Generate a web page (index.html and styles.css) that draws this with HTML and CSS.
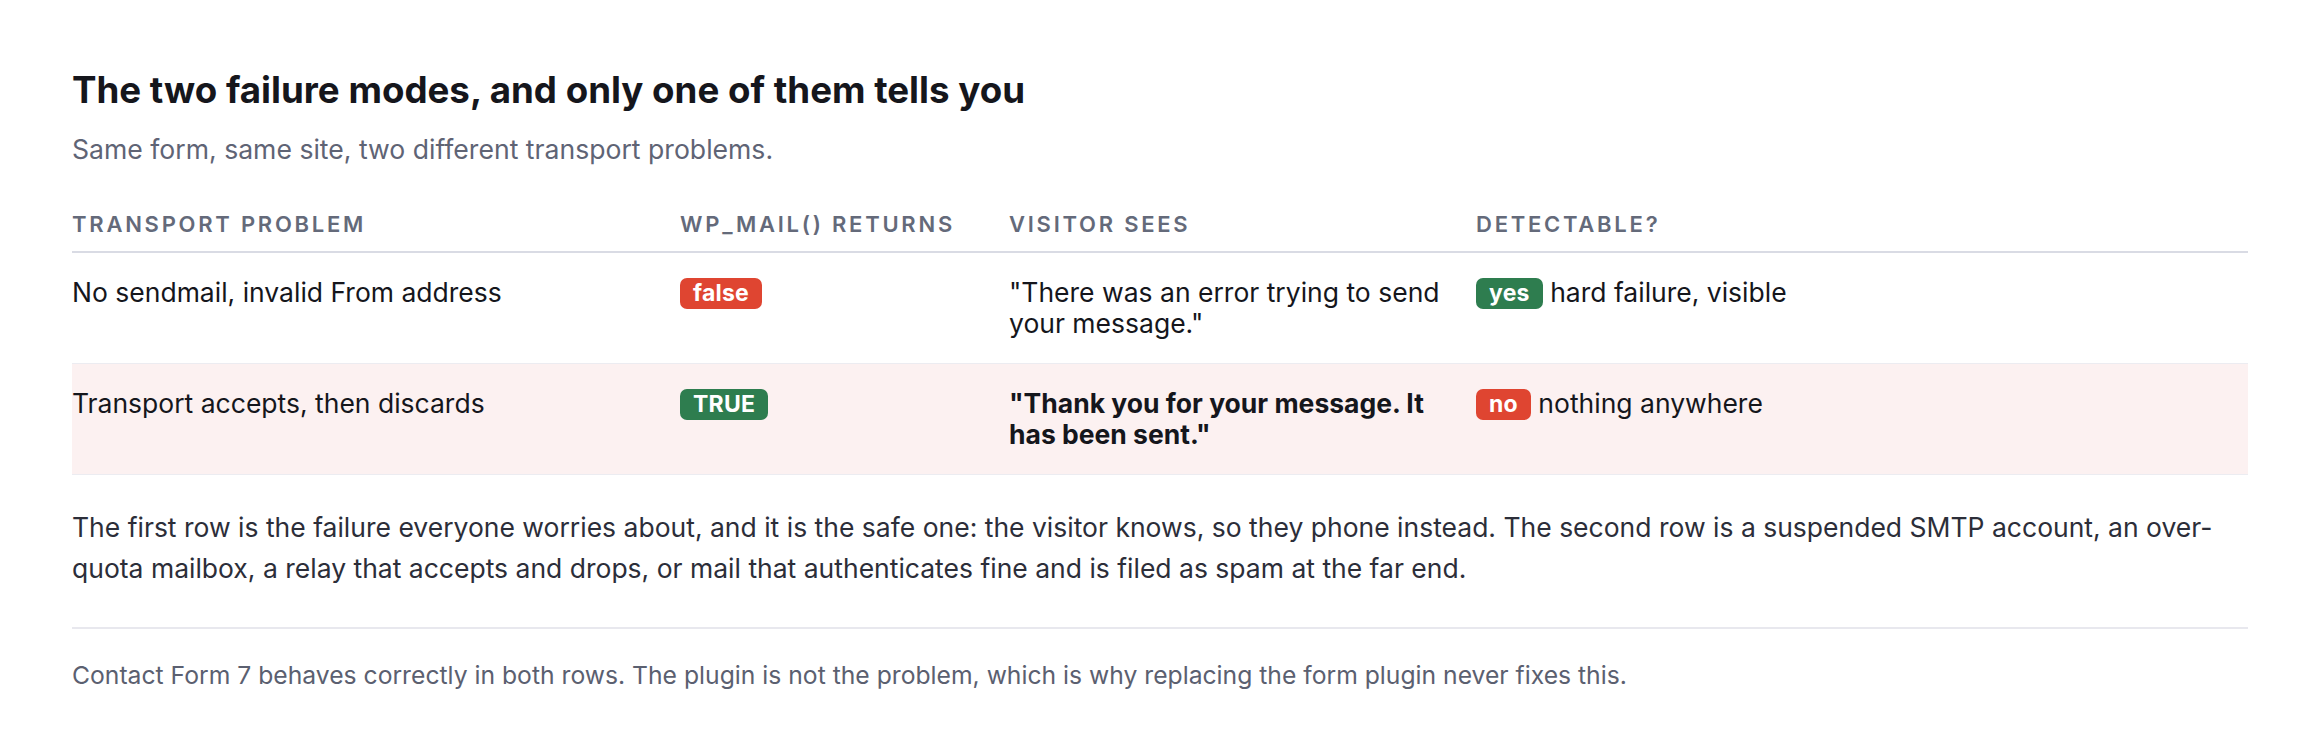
FILE: index.html
```html
<!DOCTYPE html>
<html lang="en">
<head>
<meta charset="utf-8">
<title>The two failure modes</title>
<link rel="stylesheet" href="styles.css">
</head>
<body>
<main class="page">
  <h2 class="title">The two failure modes, and only one of them tells you</h2>
  <p class="subtitle">Same form, same site, two different transport problems.</p>
  <table class="modes">
    <colgroup>
      <col class="c1"><col class="c2"><col class="c3"><col class="c4">
    </colgroup>
    <thead>
      <tr>
        <th>Transport problem</th>
        <th>wp_mail() returns</th>
        <th>Visitor sees</th>
        <th>Detectable?</th>
      </tr>
    </thead>
    <tbody>
      <tr>
        <td>No sendmail, invalid From address</td>
        <td><span class="badge red">false</span></td>
        <td>"There was an error trying to send your message."</td>
        <td><span class="badge green">yes</span> hard failure, visible</td>
      </tr>
      <tr class="danger">
        <td>Transport accepts, then discards</td>
        <td><span class="badge green">TRUE</span></td>
        <td><strong>"Thank you for your message. It has been sent."</strong></td>
        <td><span class="badge red">no</span> nothing anywhere</td>
      </tr>
    </tbody>
  </table>
  <p class="body">The first row is the failure everyone worries about, and it is the safe one: the visitor knows, so they phone instead. The second row is a suspended SMTP account, an over-quota mailbox, a relay that accepts and drops, or mail that authenticates fine and is filed as spam at the far end.</p>
  <p class="note">Contact Form 7 behaves correctly in both rows. The plugin is not the problem, which is why replacing the form plugin never fixes this.</p>
</main>
</body>
</html>
```

FILE: styles.css
```css
html, body {
  margin: 0;
  padding: 0;
  background: #ffffff;
}

body {
  font-family: Inter, "Noto Sans", "Liberation Sans", sans-serif;
  color: #15161c;
}

.page {
  padding: 68px 72px 40px;
}

.title {
  margin: 0;
  font-size: 36.7px;
  line-height: 43px;
  font-weight: 700;
  color: #15161c;
}

.subtitle {
  margin: 20px 0 28px;
  font-size: 26.6px;
  line-height: 36px;
  color: #5f6475;
}

.modes {
  width: 100%;
  border-collapse: collapse;
  table-layout: fixed;
}

.c1 { width: 608px; }
.c2 { width: 329px; }
.c3 { width: 467px; }
.c4 { width: 772px; }

.modes th {
  text-align: left;
  padding: 15px 24px 13px 0;
  font-size: 22px;
  line-height: 28px;
  font-weight: 600;
  letter-spacing: 0.125em;
  text-transform: uppercase;
  color: #646a7a;
  border-bottom: 2px solid #d9dbe4;
}

.modes td {
  vertical-align: top;
  padding: 24px 24px 24px 0;
  font-size: 26.5px;
  line-height: 31px;
  color: #15161c;
  border-bottom: 1px solid #ececf1;
}

.modes tr.danger td {
  background: #fcf1f1;
}

.modes strong {
  font-weight: 700;
}

.badge {
  display: inline-block;
  vertical-align: 1px;
  padding: 4px 13px;
  border-radius: 7px;
  font-size: 23px;
  line-height: 23px;
  font-weight: 700;
  color: #ffffff;
  letter-spacing: 0.01em;
}

.badge.red { background: #df4531; }
.badge.green { background: #2e7d4f; }

.body {
  margin: 32px 0 38px;
  font-size: 26.5px;
  line-height: 41px;
  color: #2c2e39;
}

.note {
  margin: 0;
  padding-top: 28px;
  border-top: 2px solid #e8e8ee;
  font-size: 24.7px;
  line-height: 36px;
  color: #5b6070;
}
```
